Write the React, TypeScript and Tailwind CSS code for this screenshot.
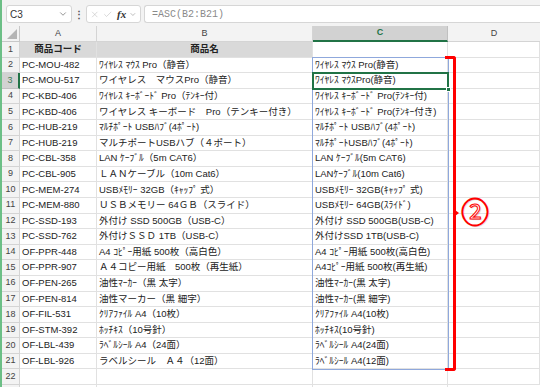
import { Check, ChevronDown, X } from "lucide-react";

const rows = [
  { a: "PC-MOU-482", b: "ﾜｲﾔﾚｽ ﾏｳｽ Pro（静音）", c: "ﾜｲﾔﾚｽ ﾏｳｽ Pro(静音)" },
  { a: "PC-MOU-517", b: "ワイヤレス　マウスPro（静音）", c: "ﾜｲﾔﾚｽ ﾏｳｽPro(静音)" },
  { a: "PC-KBD-406", b: "ﾜｲﾔﾚｽ ｷｰﾎﾞｰﾄﾞ Pro（ﾃﾝｷｰ付）", c: "ﾜｲﾔﾚｽ ｷｰﾎﾞｰﾄﾞ Pro(ﾃﾝｷｰ付)" },
  { a: "PC-KBD-406", b: "ワイヤレス キーボード　Pro（テンキー付き）", c: "ﾜｲﾔﾚｽ ｷｰﾎﾞｰﾄﾞ Pro(ﾃﾝｷｰ付き)" },
  { a: "PC-HUB-219", b: "ﾏﾙﾁﾎﾟｰﾄ USBﾊﾌﾞ(4ﾎﾟｰﾄ)", c: "ﾏﾙﾁﾎﾟｰﾄ USBﾊﾌﾞ(4ﾎﾟｰﾄ)" },
  { a: "PC-HUB-219", b: "マルチポートUSBハブ（４ポート）", c: "ﾏﾙﾁﾎﾟｰﾄUSBﾊﾌﾞ(4ﾎﾟｰﾄ)" },
  { a: "PC-CBL-358", b: "LAN ｹｰﾌﾞﾙ（5m CAT6）", c: "LAN ｹｰﾌﾞﾙ(5m CAT6)" },
  { a: "PC-CBL-905", b: "ＬＡＮケーブル（10m Cat6）", c: "LANｹｰﾌﾞﾙ(10m Cat6)" },
  { a: "PC-MEM-274", b: "USBﾒﾓﾘｰ 32GB（ｷｬｯﾌﾟ 式）", c: "USBﾒﾓﾘｰ 32GB(ｷｬｯﾌﾟ 式)" },
  { a: "PC-MEM-880", b: "ＵＳＢメモリー 64ＧＢ（スライド）", c: "USBﾒﾓﾘｰ 64GB(ｽﾗｲﾄﾞ)" },
  { a: "PC-SSD-193", b: "外付け SSD 500GB（USB-C）", c: "外付け SSD 500GB(USB-C)" },
  { a: "PC-SSD-762", b: "外付けＳＳＤ 1TB（USB-C）", c: "外付けSSD 1TB(USB-C)" },
  { a: "OF-PPR-448", b: "A4 ｺﾋﾟｰ用紙 500枚（高白色）", c: "A4 ｺﾋﾟｰ用紙 500枚(高白色)" },
  { a: "OF-PPR-907", b: "Ａ４コピー用紙　500枚（再生紙）", c: "A4ｺﾋﾟｰ用紙 500枚(再生紙)" },
  { a: "OF-PEN-265", b: "油性ﾏｰｶｰ（黒 太字）", c: "油性ﾏｰｶｰ(黒 太字)" },
  { a: "OF-PEN-814", b: "油性マーカー（黒 細字）", c: "油性ﾏｰｶｰ(黒 細字)" },
  { a: "OF-FIL-531", b: "ｸﾘｱﾌｧｲﾙ A4（10枚）", c: "ｸﾘｱﾌｧｲﾙ A4(10枚)" },
  { a: "OF-STM-392", b: "ﾎｯﾁｷｽ（10号針）", c: "ﾎｯﾁｷｽ(10号針)" },
  { a: "OF-LBL-439", b: "ﾗﾍﾞﾙｼｰﾙ A4（24面）", c: "ﾗﾍﾞﾙｼｰﾙ A4(24面)" },
  { a: "OF-LBL-926", b: "ラベルシール　Ａ４（12面）", c: "ﾗﾍﾞﾙｼｰﾙ A4(12面)" },
];

const cols = "grid grid-cols-[18px_77px_216px_135px_1fr]";
const cell = "border-r border-b border-[#e1e1e1] flex items-center px-[2px] whitespace-nowrap overflow-hidden";
const rowHead = "border-r border-b border-[#d4d4d4] bg-[#f3f3f3] flex items-center justify-center text-[9px] text-[#444]";

export default function App() {
  return (
    <div className="relative w-[540px] h-[387px] overflow-hidden bg-white flex font-['Liberation_Sans','Noto_Sans_CJK_JP',sans-serif] text-[#222]">
      <div className="w-[2px] bg-[#6cbf86] shrink-0" />

      <div className="flex-1 flex flex-col min-w-0">
        {/* Formula bar */}
        <div className="h-[26px] bg-[#f3f3f3] flex items-start pt-[5px] pl-[4px] gap-[3px] shrink-0">
          <div className="w-[66px] h-[18px] bg-white border border-[#d6d6d6] rounded-[3px] flex items-center justify-between px-[3px] text-[10px] text-[#333]">
            <span>C3</span>
            <ChevronDown size={10} strokeWidth={1.5} className="text-[#555]" />
          </div>
          <div className="w-[8px] h-[18px] flex items-center justify-center text-[10px] font-bold text-[#555]">⋮</div>
          <div className="w-[55px] h-[18px] bg-white border border-[#d6d6d6] rounded-[3px] flex items-center gap-[3px] px-[3px] text-[#b0b0b0]">
            <X size={11} strokeWidth={1.2} />
            <Check size={11} strokeWidth={1.2} />
            <span className="font-['Liberation_Serif',serif] italic font-bold text-[11px] text-[#333] ml-[2px]">fx</span>
            <ChevronDown size={9} strokeWidth={1.5} className="text-[#777]" />
          </div>
          <div className="flex-1 h-[18px] bg-white border border-[#d6d6d6] rounded-l-[3px] border-r-0 flex items-center pl-[7px] text-[10px] text-[#8a8a8a] font-['Liberation_Mono','Noto_Sans_CJK_JP',monospace]">
            =ASC(B2:B21)
          </div>
        </div>

        {/* Column headers */}
        <div className={`${cols} h-[16px] shrink-0 text-[9px] text-[#444]`}>
          <div className="border-r border-b border-[#c8c8c8] bg-[#f3f3f3] flex items-end justify-end p-[2px]">
            <svg width="10" height="10" viewBox="0 0 10 10">
              <polygon points="10,0 10,10 0,10" fill="#b5b5b5" />
            </svg>
          </div>
          <div className="border-r border-b border-[#d4d4d4] bg-[#f3f3f3] flex items-center justify-center">A</div>
          <div className="border-r border-b border-[#d4d4d4] bg-[#f3f3f3] flex items-center justify-center">B</div>
          <div className="border-r border-[#c0c0c0] border-b-2 border-b-[#217346] bg-[#d2d2d2] flex items-center justify-center text-[#217346] font-bold">C</div>
          <div className="border-b border-[#d4d4d4] bg-[#f3f3f3] flex items-center justify-center">D</div>
        </div>

        {/* Row 1 */}
        <div className={`${cols} h-[15.6px] shrink-0 text-[9.5px]`}>
          <div className={rowHead}>1</div>
          <div className={`${cell} bg-[#d9d9d9] justify-center font-bold`}>商品コード</div>
          <div className={`${cell} bg-[#d9d9d9] justify-center font-bold`}>商品名</div>
          <div className={cell} />
          <div className={cell} />
        </div>

        {rows.map((r, i) => {
          const n = i + 2;
          const active = n === 3;
          return (
            <div key={n} className={`${cols} h-[15.6px] shrink-0 text-[9.5px]`}>
              <div
                className={
                  active
                    ? "border-b border-[#c0c0c0] border-r-2 border-r-[#217346] bg-[#d2d2d2] flex items-center justify-center text-[9px] text-[#3f7a57]"
                    : rowHead
                }
              >
                {n}
              </div>
              <div className={cell}>{r.a}</div>
              <div className={cell}>{r.b}</div>
              <div className={cell}>{r.c}</div>
              <div className={cell} />
            </div>
          );
        })}

        <div className={`${cols} h-[15.6px] shrink-0 text-[9.5px]`}>
          <div className={rowHead}>22</div>
          <div className={cell} />
          <div className={cell} />
          <div className={cell} />
          <div className={cell} />
        </div>
        <div className={`${cols} flex-1`}>
          <div className="border-r border-[#d4d4d4] bg-[#f3f3f3]" />
          <div className="border-r border-[#e1e1e1]" />
          <div className="border-r border-[#e1e1e1]" />
          <div className="border-r border-[#e1e1e1]" />
          <div />
        </div>
      </div>

      {/* Range outline C2:C21 */}
      <div className="absolute left-[312px] top-[56.6px] w-[137px] h-[313px] border border-[#8fa8dc] pointer-events-none" />
      {/* Active cell C3 */}
      <div className="absolute left-[312px] top-[72.2px] w-[137px] h-[17.6px] border-2 border-[#217346] pointer-events-none" />
      <div className="absolute left-[446px] top-[87px] w-[5px] h-[5px] bg-[#217346] border border-white" />

      {/* Red bracket */}
      <div className="absolute left-[445px] top-[55.5px] w-[11px] h-[315px] border-t-[3px] border-r-[3px] border-b-[3px] border-[#ff0000] rounded-r-[3px]" />
      <div className="absolute left-[455px] top-[210px] w-0 h-0 border-y-[3px] border-y-transparent border-l-[4px] border-l-[#ff0000]" />

      <div className="absolute left-[461px] top-[197px] text-[28px] leading-none text-white font-['Noto_Sans_CJK_JP',sans-serif] font-normal [-webkit-text-stroke:1px_#ff0000] [text-shadow:1px_1px_1px_rgba(0,0,0,0.2)]">
        ②
      </div>
    </div>
  );
}
